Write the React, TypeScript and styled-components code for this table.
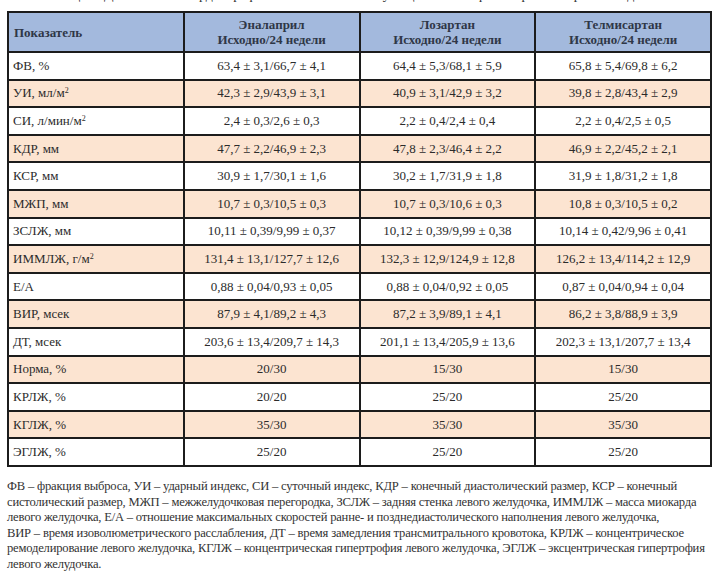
import React from "react";
import styled, { createGlobalStyle } from "styled-components";

const GlobalStyle = createGlobalStyle`
  html, body {
    margin: 0;
    padding: 0;
    background: #ffffff;
  }
  body {
    font-family: "Liberation Serif", "Times New Roman", serif;
    color: #2b2b2b;
  }
`;

const Page = styled.div`
  width: 723px;
  height: 580px;
  box-sizing: border-box;
  padding-left: 7px;
  overflow: hidden;
`;

// only the bottom of the caption line is visible in the crop
const CaptionClip = styled.div`
  height: 5px;
  overflow: hidden;
  display: flex;
  align-items: flex-end;
  margin-bottom: 6px;
`;

const Caption = styled.div`
  font-size: 14px;
  line-height: 20px;
  white-space: nowrap;
  padding-left: 30px;
  color: #333;
`;

const Table = styled.table`
  width: 705px;
  border-collapse: collapse;
  table-layout: fixed;
  border: 2px solid #1c1c1c;
  font-size: 13px;
`;

const HeadRow = styled.tr`
  background: #a3b9dd;
`;

const HeadCell = styled.th<{ $left?: boolean }>`
  height: 38px;
  padding: 0 5px;
  border: 2px solid #1c1c1c;
  text-align: ${(p) => (p.$left ? "left" : "center")};
  font-weight: bold;
  line-height: 15px;
  color: #2f3747;
`;

const Row = styled.tr<{ $shaded?: boolean }>`
  background: ${(p) => (p.$shaded ? "#fce4d1" : "#ffffff")};
`;

const Cell = styled.td<{ $left?: boolean }>`
  height: 25.6px;
  padding: 0 4px;
  border: 2px solid #1c1c1c;
  text-align: ${(p) => (p.$left ? "left" : "center")};
  vertical-align: middle;
  white-space: nowrap;
  color: #2b2b2b;
`;

const Sup = styled.sup`
  font-size: 8px;
  line-height: 0;
  vertical-align: 4px;
`;

const Notes = styled.div`
  margin-top: 12px;
  font-size: 12.6px;
  letter-spacing: -0.2px;
  line-height: 15.6px;
  color: #333;
`;

const NoteLine = styled.div`
  white-space: nowrap;
`;

interface DataRow {
  label: string;
  sup?: string;
  values: [string, string, string];
}

const rows: DataRow[] = [
  { label: "ФВ, %", values: ["63,4 ± 3,1/66,7 ± 4,1", "64,4 ± 5,3/68,1 ± 5,9", "65,8 ± 5,4/69,8 ± 6,2"] },
  { label: "УИ, мл/м", sup: "2", values: ["42,3 ± 2,9/43,9 ± 3,1", "40,9 ± 3,1/42,9 ± 3,2", "39,8 ± 2,8/43,4 ± 2,9"] },
  { label: "СИ, л/мин/м", sup: "2", values: ["2,4 ± 0,3/2,6 ± 0,3", "2,2 ± 0,4/2,4 ± 0,4", "2,2 ± 0,4/2,5 ± 0,5"] },
  { label: "КДР, мм", values: ["47,7 ± 2,2/46,9 ± 2,3", "47,8 ± 2,3/46,4 ± 2,2", "46,9 ± 2,2/45,2 ± 2,1"] },
  { label: "КСР, мм", values: ["30,9 ± 1,7/30,1 ± 1,6", "30,2 ± 1,7/31,9 ± 1,8", "31,9 ± 1,8/31,2 ± 1,8"] },
  { label: "МЖП, мм", values: ["10,7 ± 0,3/10,5 ± 0,3", "10,7 ± 0,3/10,6 ± 0,3", "10,8 ± 0,3/10,5 ± 0,2"] },
  { label: "ЗСЛЖ, мм", values: ["10,11 ± 0,39/9,99 ± 0,37", "10,12 ± 0,39/9,99 ± 0,38", "10,14 ± 0,42/9,96 ± 0,41"] },
  { label: "ИММЛЖ, г/м", sup: "2", values: ["131,4 ± 13,1/127,7 ± 12,6", "132,3 ± 12,9/124,9 ± 12,8", "126,2 ± 13,4/114,2 ± 12,9"] },
  { label: "Е/А", values: ["0,88 ± 0,04/0,93 ± 0,05", "0,88 ± 0,04/0,92 ± 0,05", "0,87 ± 0,04/0,94 ± 0,04"] },
  { label: "ВИР, мсек", values: ["87,9 ± 4,1/89,2 ± 4,3", "87,2 ± 3,9/89,1 ± 4,1", "86,2 ± 3,8/88,9 ± 3,9"] },
  { label: "ДТ, мсек", values: ["203,6 ± 13,4/209,7 ± 14,3", "201,1 ± 13,4/205,9 ± 13,6", "202,3 ± 13,1/207,7 ± 13,4"] },
  { label: "Норма, %", values: ["20/30", "15/30", "15/30"] },
  { label: "КРЛЖ, %", values: ["20/20", "25/20", "25/20"] },
  { label: "КГЛЖ, %", values: ["35/30", "35/30", "35/30"] },
  { label: "ЭГЛЖ, %", values: ["25/20", "25/20", "25/20"] },
];

const drugs = ["Эналаприл", "Лозартан", "Телмисартан"];

const notes = [
  "ФВ – фракция выброса, УИ – ударный индекс, СИ – суточный индекс, КДР – конечный диастолический размер, КСР – конечный",
  "систолический размер, МЖП – межжелудочковая перегородка, ЗСЛЖ – задняя стенка левого желудочка, ИММЛЖ – масса миокарда",
  "левого желудочка, Е/А – отношение максимальных скоростей ранне- и позднедиастолического наполнения левого желудочка,",
  "ВИР – время изоволюметрического расслабления, ДТ – время замедления трансмитрального кровотока, КРЛЖ – концентрическое",
  "ремоделирование левого желудочка, КГЛЖ – концентрическая гипертрофия левого желудочка, ЭГЛЖ – эксцентрическая гипертрофия",
  "левого желудочка.",
];

const App = () => {
  return (
    <Page>
      <GlobalStyle />
      <CaptionClip>
        <Caption>
          Таблица 2. Динамика эхокардиографических показателей у пациентов на фоне терапии через 24 недели
        </Caption>
      </CaptionClip>
      <Table>
        <thead>
          <HeadRow>
            <HeadCell $left>Показатель</HeadCell>
            {drugs.map((d) => (
              <HeadCell key={d}>
                {d}
                <br />
                Исходно/24 недели
              </HeadCell>
            ))}
          </HeadRow>
        </thead>
        <tbody>
          {rows.map((r, i) => (
            <Row key={r.label} $shaded={i % 2 === 1}>
              <Cell $left>
                {r.label}
                {r.sup && <Sup>{r.sup}</Sup>}
              </Cell>
              {r.values.map((v, j) => (
                <Cell key={j}>{v}</Cell>
              ))}
            </Row>
          ))}
        </tbody>
      </Table>
      <Notes>
        {notes.map((n) => (
          <NoteLine key={n}>{n}</NoteLine>
        ))}
      </Notes>
    </Page>
  );
};

export default App;
